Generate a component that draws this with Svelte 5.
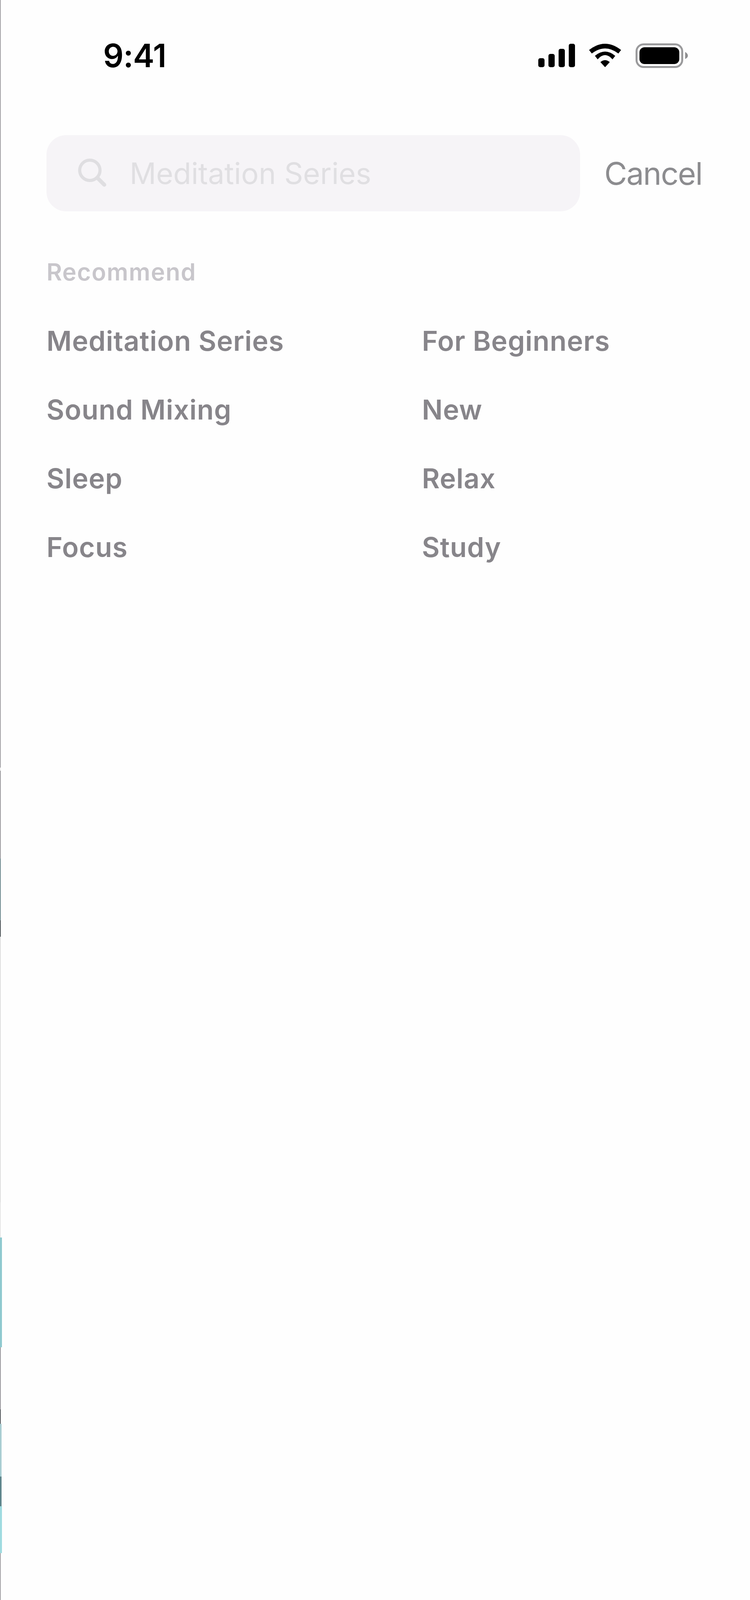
<script>
  const edge = [
    [1965, 2, '#a3a2a6'], [8, 2, '#eeeeee'], [225, 2, '#9b9a9e'], [158, 2, '#6f8a90'], [42, 2, '#4d5357'],
    [680, 2, '#dedede'], [90, 2, '#e6e6e6'], [281, 5, '#8fc9cf'], [159, 2, '#97969b'], [37, 2, '#54595c'],
    [135, 4, '#a9cdd2'], [76, 4, '#5f868c'], [120, 5, '#9fdbe0'], [182, 2, '#a3a2a6']
  ];
  const items = ['Meditation Series', 'For Beginners', 'Sound Mixing', 'New', 'Sleep', 'Relax', 'Focus', 'Study'];
</script>

<div class="page">
  <div class="edge">
    {#each edge as [h, w, c]}
      <span style="height:{h}px;width:{w}px;background:{c}"></span>
    {/each}
  </div>
  <main class="main">
    <header class="status">
      <span class="time">9:41</span>
      <div class="glyphs">
        <svg class="signal" width="94" height="60" viewBox="0 0 94 60" aria-hidden="true">
          <rect x="0" y="37" width="16" height="23" rx="5" />
          <rect x="26" y="26" width="16" height="34" rx="5" />
          <rect x="52" y="13" width="16" height="47" rx="5" />
          <rect x="78" y="0" width="16" height="60" rx="5" />
        </svg>
        <svg class="wifi" width="82" height="60" viewBox="0 0 82 60" aria-hidden="true">
          <path d="M0 16Q41 -16 82 16L75 25Q41 -1 7 25Z" />
          <path d="M15 31Q41 9 67 31L60 40Q41 18 22 40Z" />
          <path d="M29 47Q41 37 53 47L41 60Z" />
        </svg>
        <svg class="battery" width="134" height="63" viewBox="0 0 134 63" aria-hidden="true">
          <rect x="2.500" y="2.500" width="117" height="58" rx="18" fill="none" stroke="#9a9a9c" stroke-width="5" />
          <rect x="10" y="10" width="102" height="43" rx="13" fill="#000" />
          <path d="M127 22Q134 26 134 31.500Q134 37 127 40Z" fill="#8e8e90" />
        </svg>
      </div>
    </header>

    <div class="search-row">
      <div class="search">
        <svg class="lens" width="76" height="76" viewBox="0 0 76 76" aria-hidden="true">
          <circle cx="30" cy="30" r="26" />
          <path d="M49 49L67 67" class="handle" />
        </svg>
        <span class="placeholder">Meditation Series</span>
      </div>
      <span class="cancel">Cancel</span>
    </div>

    <h2 class="heading">Recommend</h2>
    <ul class="list">
      {#each items as item}
        <li>{item}</li>
      {/each}
    </ul>
  </main>
</div>

<style>
  :global(body) {
    margin: 0;
    background: #fefefe;
  }
  .page {
    display: flex;
    min-height: 4158px;
    background: #fefefe;
    font-family: Inter, "Liberation Sans", sans-serif;
  }
  .edge {
    flex: 0 0 5px;
    display: flex;
    flex-direction: column;
  }
  .edge span {
    display: block;
  }
  .main {
    flex: 1;
    padding-left: 114px;
  }
  .status {
    height: 346px;
    box-sizing: border-box;
    display: flex;
    align-items: flex-start;
    justify-content: space-between;
    padding-top: 111px;
    padding-right: 159px;
  }
  .time {
    margin-left: 145px;
    font: 600 82px/64px Inter, sans-serif;
    letter-spacing: -1px;
    color: #000;
  }
  .glyphs {
    display: flex;
    align-items: flex-start;
  }
  .signal, .wifi {
    margin-top: 1px;
    fill: #000;
  }
  .wifi {
    margin-left: 36px;
    margin-right: 37px;
  }
  .search-row {
    display: flex;
    align-items: center;
  }
  .search {
    width: 1366px;
    height: 195px;
    border-radius: 50px;
    background: #f6f4f7;
    display: flex;
    align-items: center;
    padding-left: 81px;
    box-sizing: border-box;
  }
  .lens {
    fill: none;
    stroke: #dfdee1;
    stroke-width: 8;
    margin-right: 56px;
    flex: none;
  }
  .handle {
    stroke-width: 10;
    stroke-linecap: round;
  }
  .placeholder {
    font: 400 75px/1 Inter, sans-serif;
    color: #e0dfe2;
  }
  .cancel {
    margin-left: 62px;
    font: 400 80px/1 Inter, sans-serif;
    letter-spacing: -2px;
    color: #8c8c8f;
  }
  .heading {
    margin: 115px 0 49px;
    font: 600 61px/80px Inter, sans-serif;
    letter-spacing: 1.6px;
    color: #c8c6cb;
  }
  .list {
    list-style: none;
    margin: 0;
    padding: 0;
    display: grid;
    grid-template-columns: 961px 1fr;
    grid-auto-rows: 176px;
    font: 600 70px/176px Inter, sans-serif;
    letter-spacing: 0.9px;
    color: #87858a;
  }
</style>
